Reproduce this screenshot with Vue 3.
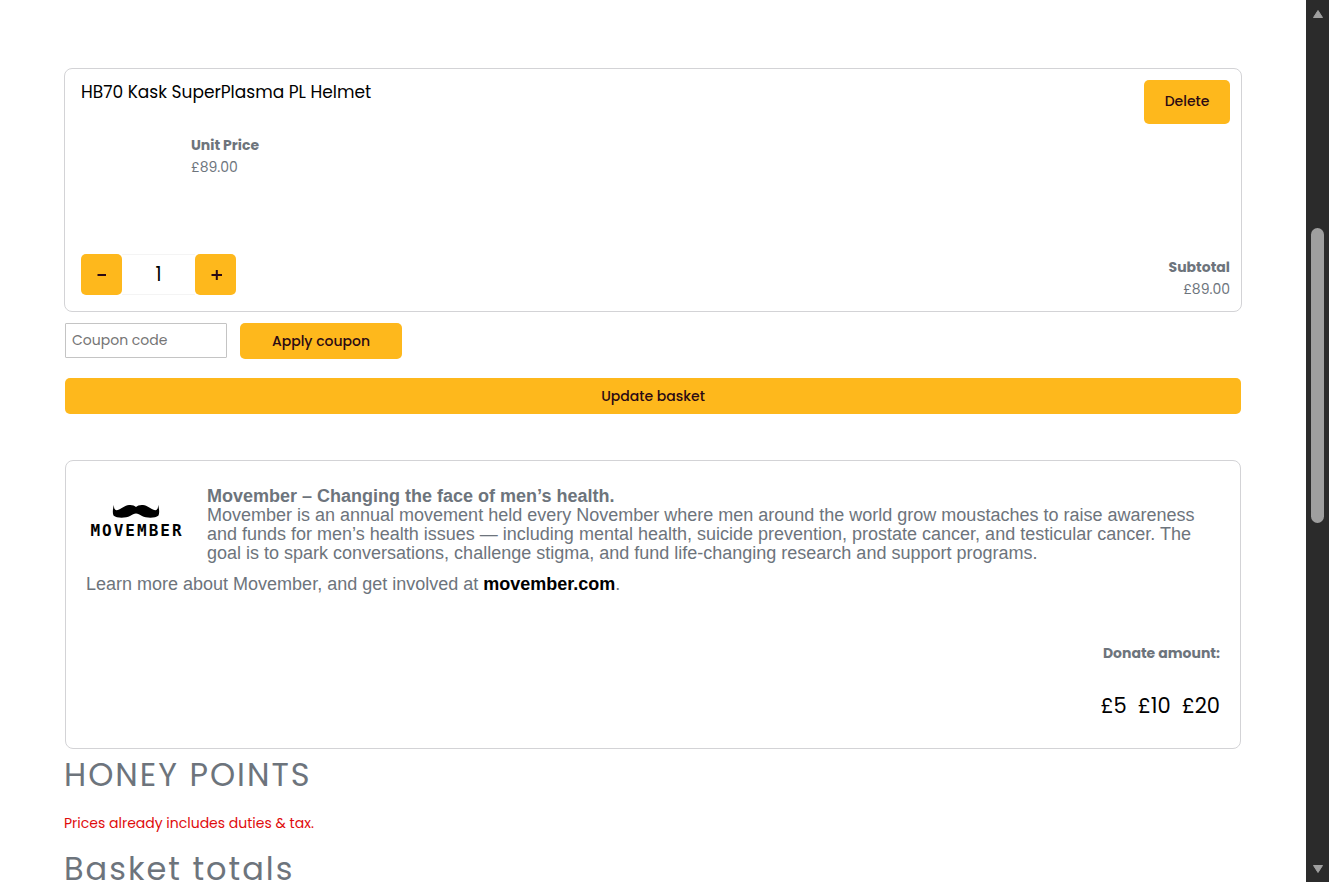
<script setup>
import { ref } from 'vue'

const quantity = ref(1)
const coupon = ref('')
const amounts = ['£5', '£10', '£20']
</script>

<template>
  <div class="window">
    <main class="page">
      <form class="basket" @submit.prevent>
        <section class="card item">
          <div class="row top">
            <a class="name" href="#">HB70 Kask SuperPlasma PL Helmet</a>
            <button class="btn delete" type="button">Delete</button>
          </div>
          <dl class="price">
            <dt>Unit Price</dt>
            <dd>£89.00</dd>
          </dl>
          <div class="row bottom">
            <div class="stepper">
              <button class="btn step" type="button" aria-label="Decrease quantity" @click="quantity = Math.max(1, quantity - 1)">
                <svg viewBox="0 0 12 12" width="12" height="12"><path d="M1.500 6H10" /></svg>
              </button>
              <input v-model="quantity" class="qty" type="text" inputmode="numeric" aria-label="Quantity" />
              <button class="btn step" type="button" aria-label="Increase quantity" @click="quantity++">
                <svg viewBox="0 0 12 12" width="12" height="12"><path d="M1.500 6H12M6.800 1V11" /></svg>
              </button>
            </div>
            <dl class="subtotal">
              <dt>Subtotal</dt>
              <dd>£89.00</dd>
            </dl>
          </div>
        </section>
        <div class="coupon">
          <input v-model="coupon" class="code" type="text" placeholder="Coupon code" aria-label="Coupon code" />
          <button class="btn apply" type="button">Apply coupon</button>
        </div>
        <button class="btn update" type="submit">Update basket</button>
      </form>

      <section class="card charity">
        <div class="intro">
          <div class="logo">
            <svg viewBox="0 0 48 15" width="48" height="15" aria-hidden="true">
              <path d="M2 0.500C1.700 3.500 2.500 6 4.500 6.300C8 6.300 12 1.500 17 1C20 0.700 22.500 1.500 24 3C25.500 1.500 28 0.700 31 1C36 1.500 40 6.300 43.500 6.300C45.500 6 46.300 3.500 46 0.500C47 4 47.800 8.500 46.500 11.500C43 14.500 34 14 30 12C27.500 10.800 26 9.500 24 9.500C22 9.500 20.500 10.800 18 12C14 14 5 14.500 1.500 11.500C0.200 8.500 1 4 2 0.500Z" />
            </svg>
            <span>MOVEMBER</span>
          </div>
          <p><strong>Movember – Changing the face of men’s health.</strong><br />Movember is an annual movement held every November where men around the world grow moustaches to raise awareness and funds for men’s health issues — including mental health, suicide prevention, prostate cancer, and testicular cancer. The goal is to spark conversations, challenge stigma, and fund life-changing research and support programs.</p>
        </div>
        <p class="learn">Learn more about Movember, and get involved at <a href="#">movember.com</a>.</p>
        <div class="donate">
          <h3>Donate amount:</h3>
          <div class="amounts">
            <a v-for="amount in amounts" :key="amount" href="#">{{ amount }}</a>
          </div>
        </div>
      </section>

      <h2>HONEY POINTS</h2>
      <p class="notice">Prices already includes duties &amp; tax.</p>
      <h2>Basket totals</h2>
    </main>

    <div class="scrollbar" aria-hidden="true">
      <svg viewBox="0 0 12 10" width="12" height="10"><path d="M6 1.500L10.500 8.500H1.500Z" /></svg>
      <div class="track"><div class="thumb"></div></div>
      <svg viewBox="0 0 12 10" width="12" height="10"><path d="M1.500 1.500H10.500L6 8.500Z" /></svg>
    </div>
  </div>
</template>

<style>
body {
  margin: 0;
  overflow: hidden;
  background: #fff;
}
</style>

<style scoped>
* {
  box-sizing: border-box;
}
.window {
  display: flex;
  height: 100vh;
  overflow: hidden;
  color: #6d747c;
  font-family: Poppins, Inter, sans-serif;
  font-size: 14px;
  line-height: 22px;
}
.page {
  flex: 1;
  min-width: 0;
  padding: 68px 64px 0;
}
input,
button {
  font: inherit;
}
a {
  color: #000;
  text-decoration: none;
}
dl,
dd,
p,
h2,
h3 {
  margin: 0;
}
dt {
  font-weight: 700;
}
.card {
  border: 1px solid #d3d3d6;
  border-radius: 8px;
}
.row {
  display: flex;
  justify-content: space-between;
}
.item {
  display: flex;
  flex-direction: column;
  padding: 11px 11px 11px 16px;
}
.top {
  align-items: flex-start;
}
.name {
  font-size: 17px;
  line-height: 24px;
}
.btn {
  display: flex;
  align-items: center;
  justify-content: center;
  padding: 0;
  border: 0;
  border-radius: 5px;
  background: #feb81c;
  color: #2b0a14;
  font-weight: 500;
}
.delete {
  width: 86px;
  height: 44px;
  padding-bottom: 2px;
}
.price {
  padding: 10px 0 0 110px;
}
.bottom {
  align-items: flex-end;
  padding-top: 76px;
}
.stepper {
  display: flex;
  padding-bottom: 5px;
}
.step {
  width: 41px;
  height: 41px;
}
.step path {
  fill: none;
  stroke: #2b0a14;
  stroke-width: 2;
}
.qty {
  width: 73px;
  border: 1px solid #f4f4f4;
  border-width: 1px 0;
  background: #fff;
  color: #000;
  font-size: 19px;
  text-align: center;
}
.subtotal {
  text-align: right;
}
.coupon {
  display: flex;
  gap: 13px;
  padding: 11px 1px 19px;
}
.code {
  width: 162px;
  height: 35px;
  padding: 0 6px;
  border: 1px solid #c4c4c4;
  border-radius: 1px;
  color: #222;
}
.code::placeholder {
  color: #757575;
  opacity: 1;
}
.apply {
  width: 162px;
  height: 36px;
}
.update {
  width: calc(100% - 2px);
  height: 36px;
  margin: 0 1px;
}
.charity {
  margin: 46px 1px 0;
  padding: 26px 20px 27px;
}
.intro {
  display: flex;
  gap: 21px;
}
.intro p,
.learn {
  font-family: "Liberation Sans", Arial, sans-serif;
  font-size: 18px;
}
.intro p {
  flex: 1;
  line-height: 19px;
  margin-bottom: 10px;
}
.logo {
  display: flex;
  flex-direction: column;
  align-items: center;
  width: 100px;
  padding-top: 17px;
  color: #000;
}
.logo span {
  padding-left: 2px;
  font-family: "DejaVu Sans Mono", monospace;
  font-size: 16px;
  font-weight: 700;
  line-height: 24px;
  letter-spacing: 2px;
}
.learn a {
  font-weight: 700;
}
.donate {
  display: flex;
  flex-direction: column;
  align-items: flex-end;
  padding-top: 47px;
}
h3 {
  font-size: 14px;
  font-weight: 700;
}
.amounts {
  display: flex;
  gap: 11px;
  padding-top: 27px;
  font-size: 21px;
  line-height: 30px;
}
h2 {
  padding-top: 8px;
  font-size: 32px;
  font-weight: 400;
  line-height: 36px;
  letter-spacing: 2px;
}
.notice {
  padding: 19px 0 9px;
  color: #e00c0c;
}
.scrollbar {
  display: flex;
  flex-direction: column;
  align-items: center;
  width: 23px;
  padding: 9px 0 8px;
  background: #2b2b2b;
}
.scrollbar path {
  fill: #a0a0a0;
  stroke: #a0a0a0;
  stroke-linejoin: round;
}
.track {
  flex: 1;
  width: 13px;
  padding: 209px 0;
}
.thumb {
  height: 295px;
  border-radius: 7px;
  background: #9f9f9f;
}
</style>
